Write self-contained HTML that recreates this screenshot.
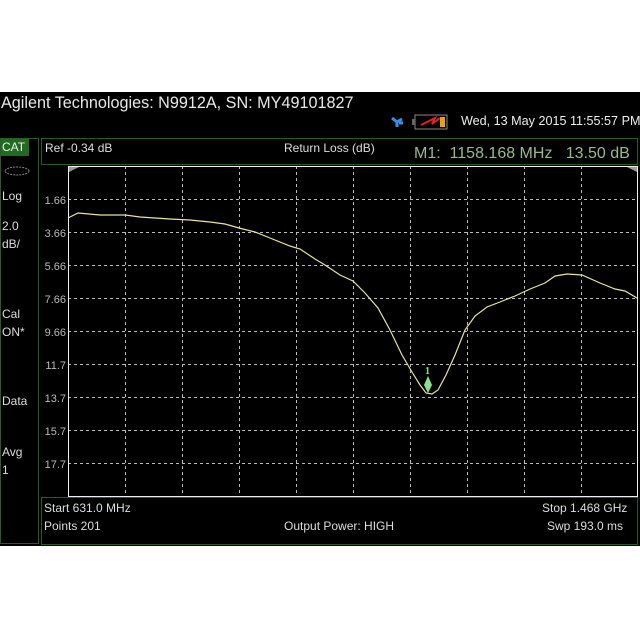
<!DOCTYPE html>
<html><head><style>
body{margin:0;width:640px;height:640px;background:#fff;overflow:hidden;font-family:"Liberation Sans",sans-serif;position:relative}
.blk{position:absolute;left:0;top:92px;width:640px;height:454px;background:#000}
.t{position:absolute;color:#ddd;font-size:12px;white-space:nowrap}
</style></head><body>
<div class="blk"></div>
<div class="t" style="left:1px;top:94px;font-size:16.2px;color:#e8e8e8">Agilent Technologies: N9912A, SN: MY49101827</div>
<div class="t" style="left:461px;top:114px;font-size:12.6px;color:#eee">Wed, 13 May 2015 11:55:57 PM</div>
<svg style="position:absolute;left:390px;top:113px" width="70" height="18">
<path d="M2 5 L7 9 L12 6 M7 9 L7 14 M9 10 h4" stroke="#3a8ee8" stroke-width="3" fill="none"/>
<rect x="25" y="2" width="32" height="14" fill="none" stroke="#888"/>
<rect x="22" y="6" width="3" height="6" fill="#666"/>
<path d="M31 12 L45 5 L42 11 L50 5" stroke="#d22" stroke-width="2" fill="none"/>
<rect x="50" y="4" width="5" height="10" fill="#f0a000"/>
</svg>
<div style="position:absolute;left:0;top:138px;width:39px;height:406px;border:1px solid #2a5a2a;box-sizing:border-box"></div>
<div style="position:absolute;left:1px;top:139px;width:28px;height:17px;background:#1f6b1f"></div>
<div class="t" style="left:2px;top:140px;color:#eee">CAT</div>
<svg style="position:absolute;left:3px;top:165px" width="28" height="12"><ellipse cx="14" cy="6" rx="12" ry="4" fill="none" stroke="#888" stroke-dasharray="2 1"/></svg>
<div class="t" style="left:2px;top:189px">Log</div>
<div class="t" style="left:2px;top:219px">2.0</div>
<div class="t" style="left:2px;top:237px">dB/</div>
<div class="t" style="left:2px;top:307px">Cal</div>
<div class="t" style="left:2px;top:325px">ON*</div>
<div class="t" style="left:2px;top:394px">Data</div>
<div class="t" style="left:2px;top:445px">Avg</div>
<div class="t" style="left:2px;top:463px">1</div>
<div style="position:absolute;left:41px;top:138px;width:597px;height:27px;border:1px solid #2a5a2a;box-sizing:border-box"></div>
<div class="t" style="left:45px;top:141px">Ref -0.34 dB</div>
<div class="t" style="left:284px;top:141px">Return Loss (dB)</div>
<div class="t" style="left:414px;top:145px;font-size:16px;color:#9cb88c">M1:&nbsp; 1158.168 MHz&nbsp;&nbsp; 13.50 dB</div>
<div style="position:absolute;left:41px;top:497px;width:597px;height:48px;border:1px solid #2a5a2a;box-sizing:border-box"></div>
<div class="t" style="left:44px;top:501px">Start 631.0 MHz</div>
<div class="t" style="left:44px;top:519px">Points 201</div>
<div class="t" style="left:284px;top:519px">Output Power: HIGH</div>
<div class="t" style="left:542px;top:501px">Stop 1.468 GHz</div>
<div class="t" style="left:547px;top:519px">Swp 193.0 ms</div>
<svg style="position:absolute;left:0;top:0" width="640" height="640">
<g stroke="#bbb" stroke-dasharray="3 3" stroke-width="1">
<line x1="125.5" y1="166" x2="125.5" y2="496"/><line x1="182.5" y1="166" x2="182.5" y2="496"/><line x1="239.5" y1="166" x2="239.5" y2="496"/><line x1="296.5" y1="166" x2="296.5" y2="496"/><line x1="353.5" y1="166" x2="353.5" y2="496"/><line x1="410.5" y1="166" x2="410.5" y2="496"/><line x1="467.5" y1="166" x2="467.5" y2="496"/><line x1="524.5" y1="166" x2="524.5" y2="496"/><line x1="581.5" y1="166" x2="581.5" y2="496"/>
<line x1="68" y1="199.5" x2="637" y2="199.5"/><line x1="68" y1="232.5" x2="637" y2="232.5"/><line x1="68" y1="265.5" x2="637" y2="265.5"/><line x1="68" y1="298.5" x2="637" y2="298.5"/><line x1="68" y1="331.5" x2="637" y2="331.5"/><line x1="68" y1="364.5" x2="637" y2="364.5"/><line x1="68" y1="397.5" x2="637" y2="397.5"/><line x1="68" y1="430.5" x2="637" y2="430.5"/><line x1="68" y1="463.5" x2="637" y2="463.5"/>
</g>
<rect x="68.5" y="166.5" width="569" height="330" fill="none" stroke="#eee"/>
<path d="M69 167 h10 l-10 5z" fill="#999"/><path d="M637 167 h-10 l10 5z" fill="#999"/>
<g fill="#bbb" font-size="11" font-family="Liberation Sans,sans-serif" text-anchor="end">
<text x="66" y="204">1.66</text><text x="66" y="237">3.66</text><text x="66" y="270">5.66</text><text x="66" y="303">7.66</text><text x="66" y="336">9.66</text><text x="66" y="369">11.7</text><text x="66" y="402">13.7</text><text x="66" y="435">15.7</text><text x="66" y="468">17.7</text></g>
<polyline fill="none" stroke="#e8e4a0" stroke-width="1.2" points="68,218 78,213 100,215 125,215 140,217 170,219 190,220 210,222 225,224 239,228 255,232 270,238 290,246 300,249 315,259 325,265 340,275 353,281 365,293 378,308 390,330 402,355 412,372 420,385 426,393 432,394 438,390 446,375 455,355 465,330 475,316 487,307 500,302 515,296 530,289 545,283 555,276 567,274 582,275 600,283 615,289 625,291 637,298"/>
<path d="M428 376 L432 385 L428 393 L424 385Z" fill="#8ee08e"/>
<text x="425" y="374" fill="#8ee08e" font-size="10" font-weight="bold" font-family="Liberation Serif,serif">1</text>
</svg>
</body></html>
